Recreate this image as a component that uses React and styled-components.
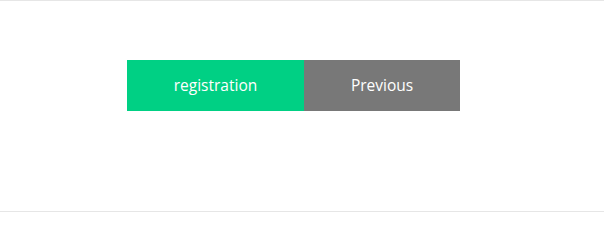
import styled, { createGlobalStyle } from "styled-components"

const GlobalStyle = createGlobalStyle`
    body {
        margin: 0;
        background: #ffffff;
        font-family: "Open Sans", "Noto Sans", sans-serif;
    }
`

const Frame = styled.div`
    height: 212px;
    box-sizing: border-box;
    border-top: 1px solid #e6e6e6;
    border-bottom: 1px solid #e6e6e6;
    padding: 59px 0 0 127px;
`

const ButtonRow = styled.div`
    display: flex;
`

const Button = styled.button`
    width: ${(props) => props.width}px;
    height: 51px;
    border: none;
    border-radius: 0;
    margin: 0;
    padding: 0 0 2px;
    background-color: ${(props) => props.bg};
    color: #ffffff;
    font-family: "Open Sans", "Noto Sans", sans-serif;
    font-size: 15.5px;
    cursor: pointer;
`

const App = () => {
    return (
        <>
            <GlobalStyle />
            <Frame>
                <ButtonRow>
                    <Button width={177} bg="#00d084">registration</Button>
                    <Button width={156} bg="#787878">Previous</Button>
                </ButtonRow>
            </Frame>
        </>
    )
}

export default App
